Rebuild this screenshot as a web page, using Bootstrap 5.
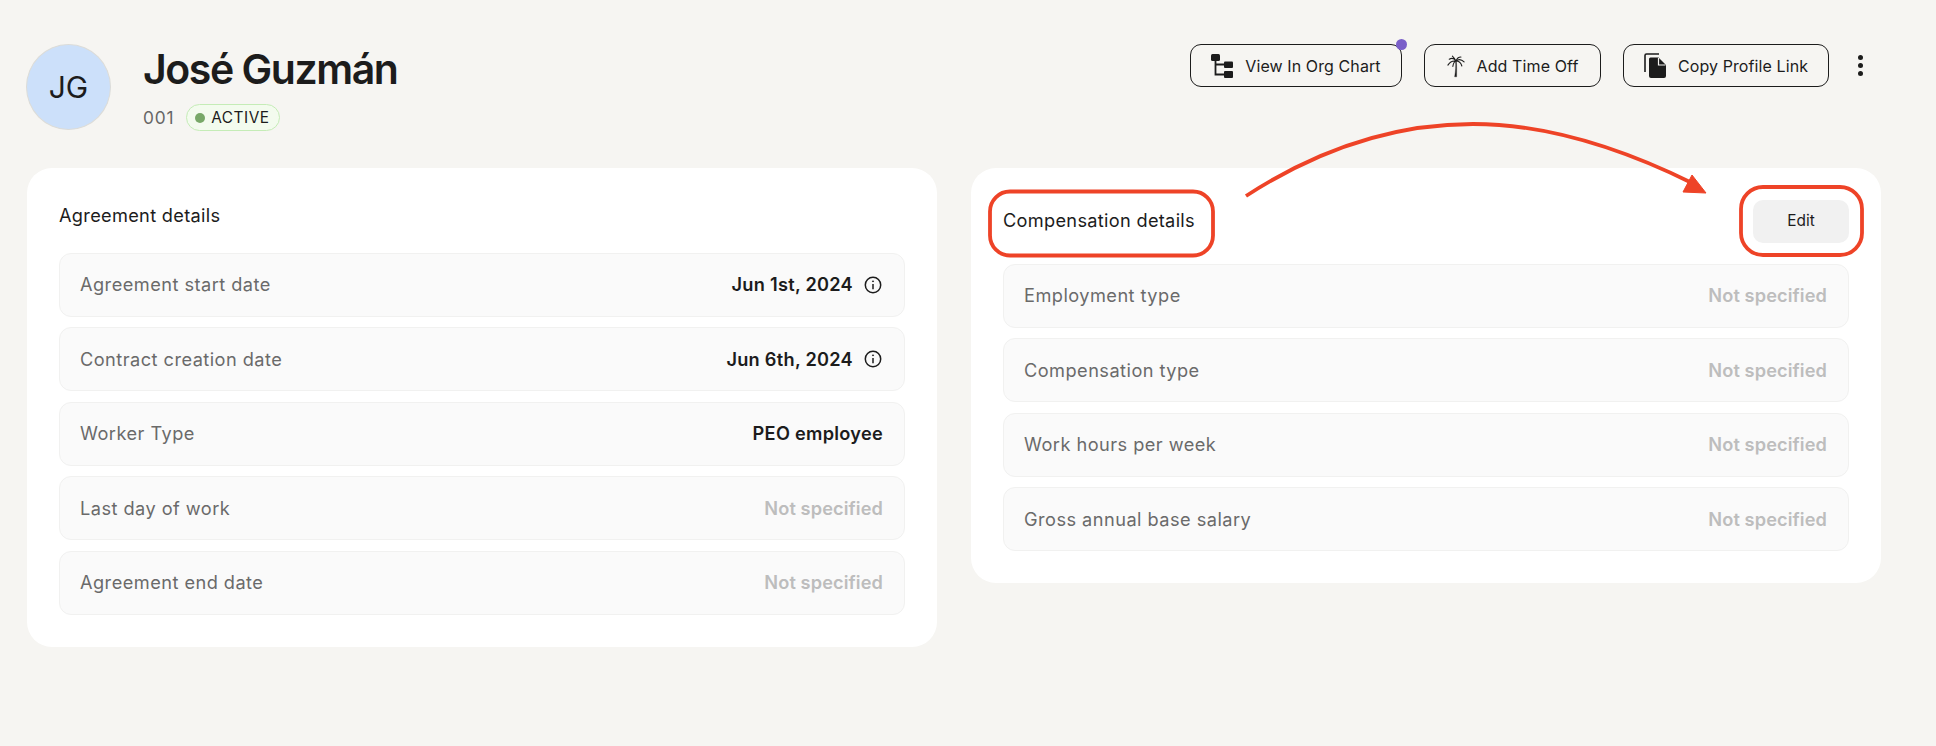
<!DOCTYPE html>
<html lang="en">
<head>
<meta charset="utf-8">
<title>José Guzmán</title>
<link rel="stylesheet" href="https://cdn.jsdelivr.net/npm/bootstrap@5.3.0/dist/css/bootstrap.min.css">
<style>
html,body{height:100%}
body{background:#f6f5f2;font-family:Inter,"Liberation Sans",sans-serif;color:#1c1c1c;overflow:hidden}
.page-shell{position:relative;width:1936px;height:746px;padding:44px 55px 0 26px}
.head-zone{height:124px;align-items:flex-start}
.avatar-disc{width:85px;height:86px;border-radius:50%;background:#cce0fa;border:1px solid #dcdcd8;font-size:30px;color:#1c1c1c;flex:none}
.name-block{margin-left:32px}
.person-name{font-size:41px;font-weight:600;letter-spacing:-1.45px;line-height:50px;margin:0;color:#1c1c1c}
.person-meta{margin-top:10px;height:27px;gap:12px}
.person-id{font-size:17.3px;color:#666;letter-spacing:.8px}
.state-pill{height:27px;padding:0 9px 0 8px;border:1px solid #c5ecb7;background:#f3fbee;border-radius:14px;font-size:15.4px;font-weight:400;letter-spacing:.5px;gap:6px;color:#1c1c1c}
.state-dot{width:10px;height:10px;border-radius:50%;background:#78a868}
.action-bar{gap:22px;height:43px;padding-right:14px}
.action-btn{position:relative;height:43px;border:1px solid #1c1c1c;border-radius:11px;background:transparent;color:#1c1c1c;font-size:16px;font-weight:400;letter-spacing:.1px;padding:0;gap:12px;display:flex;align-items:center;justify-content:center}
.action-org{width:212px}
.action-time{width:177px}
.action-copy{width:206px}
.ping-dot{position:absolute;top:-6px;right:-6px;width:11px;height:11px;background:#7a5fc9;border-radius:50%}
.more-dots{width:14px;margin-left:2px;gap:3px}
.more-dots i{display:block;width:5px;height:5px;border-radius:50%;background:#1c1c1c}
.cards-zone{gap:34px;padding-left:1px;align-items:flex-start}
.info-panel{width:910px;border:0;border-radius:25px;background:#fff;padding:0 32px 32px}
.panel-head{height:85px;align-items:center;padding-top:10px}
.panel-head-alt{height:96px;padding-top:10px}
.panel-title{font-size:18.2px;font-weight:400;letter-spacing:.3px;margin:0;color:#1c1c1c}
.info-rows{gap:10.4px}
.info-row{height:64px;padding:0 21px;background:#fafafa;border:1px solid #f1f1f0;border-radius:12px;font-size:18.2px}
.info-label{color:#6a6a6a;letter-spacing:.46px;margin-left:-1px}
.info-value{font-weight:600;color:#1c1c1c;letter-spacing:.27px}
.info-empty{font-weight:600;color:#bdbdbd;letter-spacing:.1px}
.tip-icon{margin-left:11px;margin-right:1px;flex:none}
.edit-btn{width:96px;height:43px;background:#f1f1f1;border:0;border-radius:10px;font-size:15.4px;font-weight:400;color:#1c1c1c;padding:0}
.mark-layer{position:absolute;left:0;top:0;pointer-events:none}
</style>
</head>
<body>
<div class="page-shell">
  <div class="d-flex justify-content-between head-zone">
    <div class="d-flex">
      <div class="avatar-disc d-flex align-items-center justify-content-center">JG</div>
      <div class="name-block">
        <h1 class="person-name">José Guzmán</h1>
        <div class="d-flex align-items-center person-meta">
          <span class="person-id">001</span>
          <span class="state-pill d-inline-flex align-items-center"><span class="state-dot"></span>ACTIVE</span>
        </div>
      </div>
    </div>
    <div class="d-flex align-items-center action-bar">
      <button class="btn action-btn action-org" type="button">
        <svg width="22" height="24" viewBox="0 0 22 24" fill="#1c1c1c"><rect x="0" y="0" width="9" height="7" rx="1.5"/><rect x="13" y="7.5" width="9" height="6.5" rx="1"/><rect x="13" y="17" width="9" height="7" rx="1"/><path d="M4.5 6v14.5H13M4.5 10.500H13" fill="none" stroke="#1c1c1c" stroke-width="1.800"/></svg>
        <span>View In Org Chart</span><span class="ping-dot"></span>
      </button>
      <button class="btn action-btn action-time" type="button">
        <svg width="18" height="24" viewBox="0 0 20 24" fill="none" stroke="#1c1c1c" stroke-linecap="round"><path d="M9.500 7C10 12 9.500 18 8.500 24h2.200C10.800 18 10.800 12 10.500 7Z" fill="#1c1c1c" stroke-width=".4"/><path d="M10 6.500C8 3.500 5 3 2.500 4.500M10 6.500C7 6 3.500 7 1 11M10 6.500C8.500 7 7 9 6.500 12.500M10 6.500C11 3.500 13 2 15.500 2M10 6.500C13 4 16.500 5 19 7.500M10 6.500C13 6.500 15.500 8.500 16.500 12M6 1C7.500 2.500 9 4 10 6.500" stroke-width="1.200"/></svg>
        <span>Add Time Off</span>
      </button>
      <button class="btn action-btn action-copy" type="button">
        <svg width="22" height="25" viewBox="0 0 22 25"><path d="M1 19V2.500A1.500 1.500 0 0 1 2.500 1H15" fill="none" stroke="#1c1c1c" stroke-width="1.600"/><path d="M5 6a1.500 1.500 0 0 1 1.500-1.500H14.500L22 12V23a2 2 0 0 1-2 2H7a2 2 0 0 1-2-2Z" fill="#1c1c1c"/><path d="M14.500 5V12H21.500" fill="none" stroke="#f6f5f2" stroke-width="1.200"/></svg>
        <span>Copy Profile Link</span>
      </button>
      <div class="d-flex flex-column align-items-center more-dots"><i></i><i></i><i></i></div>
    </div>
  </div>
  <div class="d-flex cards-zone">
    <section class="card info-panel">
      <div class="d-flex panel-head"><h2 class="panel-title">Agreement details</h2></div>
      <div class="d-flex flex-column info-rows">
        <div class="d-flex align-items-center justify-content-between info-row"><span class="info-label">Agreement start date</span><span class="d-flex align-items-center"><span class="info-value">Jun 1st, 2024</span><svg class="tip-icon" width="18" height="18" viewBox="0 0 18 18" fill="none" stroke="#1c1c1c" stroke-width="1.500"><circle cx="9" cy="9" r="7.700"/><path d="M9 8v5.200"/><circle cx="9" cy="5.300" r=".5" fill="#1c1c1c" stroke-width="1"/></svg></span></div>
        <div class="d-flex align-items-center justify-content-between info-row"><span class="info-label">Contract creation date</span><span class="d-flex align-items-center"><span class="info-value">Jun 6th, 2024</span><svg class="tip-icon" width="18" height="18" viewBox="0 0 18 18" fill="none" stroke="#1c1c1c" stroke-width="1.500"><circle cx="9" cy="9" r="7.700"/><path d="M9 8v5.200"/><circle cx="9" cy="5.300" r=".5" fill="#1c1c1c" stroke-width="1"/></svg></span></div>
        <div class="d-flex align-items-center justify-content-between info-row"><span class="info-label">Worker Type</span><span class="info-value">PEO employee</span></div>
        <div class="d-flex align-items-center justify-content-between info-row"><span class="info-label">Last day of work</span><span class="info-empty">Not specified</span></div>
        <div class="d-flex align-items-center justify-content-between info-row"><span class="info-label">Agreement end date</span><span class="info-empty">Not specified</span></div>
      </div>
    </section>
    <section class="card info-panel">
      <div class="d-flex justify-content-between panel-head panel-head-alt"><h2 class="panel-title">Compensation details</h2><button class="btn edit-btn" type="button">Edit</button></div>
      <div class="d-flex flex-column info-rows">
        <div class="d-flex align-items-center justify-content-between info-row"><span class="info-label">Employment type</span><span class="info-empty">Not specified</span></div>
        <div class="d-flex align-items-center justify-content-between info-row"><span class="info-label">Compensation type</span><span class="info-empty">Not specified</span></div>
        <div class="d-flex align-items-center justify-content-between info-row"><span class="info-label">Work hours per week</span><span class="info-empty">Not specified</span></div>
        <div class="d-flex align-items-center justify-content-between info-row"><span class="info-label">Gross annual base salary</span><span class="info-empty">Not specified</span></div>
      </div>
    </section>
  </div>
  <svg class="mark-layer" width="1936" height="746" viewBox="0 0 1936 746" fill="none" stroke="#ee4327" stroke-width="3.800">
    <rect x="990" y="191.500" width="223" height="64" rx="20"/>
    <rect x="1741" y="187" width="121" height="68" rx="22"/>
    <path d="M1246 196C1320 148 1395 124 1473 124C1550 124 1625 150 1692 183"/>
    <path d="M1706 193L1692 175L1683 192Z" fill="#ee4327" stroke-width="1"/>
  </svg>
</div>
</body>
</html>
